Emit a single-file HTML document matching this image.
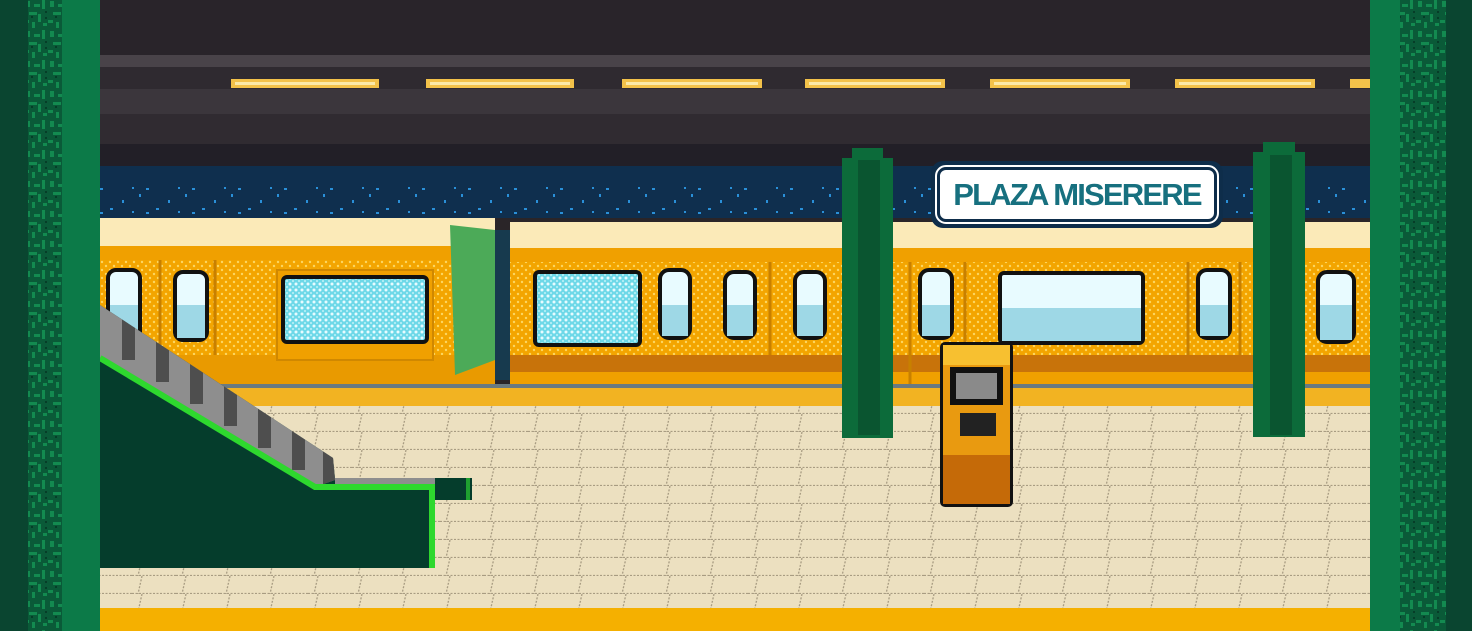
<!DOCTYPE html>
<html><head><meta charset="utf-8"><style>
html,body{margin:0;padding:0;width:1472px;height:631px;overflow:hidden;background:#2a2528}
svg{display:block}
.sign{position:absolute;left:931px;top:161px;width:292px;height:67px;box-sizing:border-box;background:#0e2d4a;border-radius:12px;padding:6px}
.sign div{width:100%;height:100%;box-sizing:border-box;background:#fff;border:3px solid #0e2d4a;border-radius:9px;outline:2px solid #fff;display:flex;align-items:center;justify-content:center;font:bold 31px "Liberation Sans",sans-serif;color:#17707f;letter-spacing:-1.8px}
</style></head><body>
<svg width="1472" height="631" viewBox="0 0 1472 631" style="position:absolute;left:0;top:0">
<defs>
<pattern id="tile" width="44" height="18" patternUnits="userSpaceOnUse"><rect width="44" height="18" fill="#ece0c0"/><path d="M0 17.5H44M10 0L6 18" stroke="#a89c82" stroke-width="1.3" stroke-dasharray="2 1.5"/></pattern>
<pattern id="dots" width="8" height="8" patternUnits="userSpaceOnUse"><rect width="8" height="8" fill="#f3a500"/><circle cx="2" cy="2" r="1.2" fill="#fcd660"/><circle cx="6" cy="6" r="1.2" fill="#fcd660"/></pattern>
<pattern id="glass" width="6" height="6" patternUnits="userSpaceOnUse"><rect width="6" height="6" fill="#6ed8e8"/><circle cx="2" cy="2" r="1.5" fill="#e8fbff"/><circle cx="5" cy="5" r="1" fill="#c0f2f8"/></pattern>
<pattern id="noise" width="24" height="30" patternUnits="userSpaceOnUse"><rect width="24" height="30" fill="#0a5a38"/><g fill="#138a50"><rect x="2" y="1" width="4" height="6"/><rect x="10" y="4" width="6" height="3"/><rect x="18" y="0" width="3" height="9"/><rect x="5" y="12" width="8" height="3"/><rect x="14" y="14" width="3" height="8"/><rect x="0" y="20" width="5" height="3"/><rect x="8" y="22" width="3" height="6"/><rect x="19" y="23" width="4" height="3"/></g><g fill="#063d28"><rect x="21" y="11" width="2" height="2"/><rect x="21" y="17" width="2" height="2"/><rect x="7" y="16" width="2" height="2"/></g></pattern>
<pattern id="specks" width="46" height="24" patternUnits="userSpaceOnUse"><g fill="#2a90d8"><rect x="1" y="2" width="2" height="3"/><rect x="18" y="16" width="3" height="2"/><rect x="30" y="8" width="2" height="3"/><rect x="40" y="19" width="2" height="2"/><rect x="8" y="20" width="3" height="2"/></g></pattern>
<clipPath id="esc"><polygon points="100,305 333,458 335,480 315,487 100,358"/></clipPath>
</defs>
<!-- ceiling -->
<rect x="100" y="0" width="1270" height="55" fill="#29242a"/>
<rect x="100" y="55" width="1270" height="12" fill="#494349"/>
<rect x="100" y="67" width="1270" height="22" fill="#2f2a30"/>
<g fill="#f3c24a"><rect x="231" y="79" width="148" height="9"/><rect x="426" y="79" width="148" height="9"/><rect x="622" y="79" width="140" height="9"/><rect x="805" y="79" width="140" height="9"/><rect x="990" y="79" width="140" height="9"/><rect x="1175" y="79" width="140" height="9"/><rect x="1350" y="79" width="20" height="9"/></g>
<g fill="#fbe9a8"><rect x="235" y="82" width="140" height="3"/><rect x="430" y="82" width="140" height="3"/><rect x="626" y="82" width="132" height="3"/><rect x="809" y="82" width="132" height="3"/><rect x="994" y="82" width="132" height="3"/><rect x="1179" y="82" width="132" height="3"/></g>
<rect x="100" y="89" width="1270" height="25" fill="#3b363c"/>
<rect x="100" y="114" width="1270" height="30" fill="#302b31"/>
<rect x="100" y="144" width="1270" height="22" fill="#221f27"/>
<rect x="100" y="166" width="1270" height="52" fill="#0f2f4e"/>
<rect x="100" y="186" width="1270" height="30" fill="url(#specks)"/>
<!-- train car 1 -->
<rect x="100" y="218" width="395" height="28" fill="#fbeab8"/>
<rect x="100" y="246" width="395" height="138" fill="url(#dots)"/>
<rect x="100" y="246" width="395" height="14" fill="#f0a000"/>
<rect x="100" y="355" width="395" height="30" fill="#e99a00"/>
<rect x="277" y="270" width="156" height="90" fill="#f0a000" stroke="#d08800" stroke-width="2"/>
<path d="M450 225L495 230V360L455 375Z" fill="#4caa58"/>
<rect x="495" y="230" width="15" height="150" fill="#173a4e"/>
<!-- car 2 -->
<rect x="510" y="222" width="860" height="26" fill="#fbeab8"/>
<rect x="510" y="248" width="860" height="137" fill="url(#dots)"/>
<rect x="510" y="248" width="860" height="14" fill="#f0a000"/>
<rect x="510" y="355" width="860" height="17" fill="#c8730a"/>
<rect x="510" y="372" width="860" height="12" fill="#f0a000"/>
<g stroke="#c88000" stroke-width="3"><path d="M160 260V355M215 260V355M770 262V355M910 262V385M965 262V385M1188 262V355M1240 262V355"/></g>
<!-- windows -->
<g stroke="#111" stroke-width="4">
<rect x="108" y="270" width="32" height="70" rx="8" fill="#e8fbff"/>
<rect x="175" y="272" width="32" height="68" rx="8" fill="#e8fbff"/>
<rect x="283" y="277" width="144" height="65" rx="4" fill="url(#glass)"/>
<rect x="535" y="272" width="105" height="73" rx="4" fill="url(#glass)"/>
<rect x="660" y="270" width="30" height="68" rx="9" fill="#e8fbff"/>
<rect x="725" y="272" width="30" height="66" rx="9" fill="#e8fbff"/>
<rect x="795" y="272" width="30" height="66" rx="9" fill="#e8fbff"/>
<rect x="920" y="270" width="32" height="68" rx="9" fill="#e8fbff"/>
<rect x="1000" y="273" width="143" height="70" rx="4" fill="#e8fbff"/>
<rect x="1198" y="270" width="32" height="68" rx="9" fill="#e8fbff"/>
<rect x="1318" y="272" width="36" height="70" rx="9" fill="#e8fbff"/>
</g>
<g fill="#9ed8e6"><rect x="110" y="305" width="28" height="33"/><rect x="177" y="305" width="28" height="33"/><rect x="662" y="305" width="26" height="31"/><rect x="727" y="305" width="26" height="31"/><rect x="797" y="305" width="26" height="31"/><rect x="922" y="305" width="28" height="31"/><rect x="1002" y="308" width="139" height="33"/><rect x="1200" y="305" width="28" height="31"/><rect x="1320" y="305" width="32" height="35"/></g>
<!-- platform -->
<rect x="100" y="384" width="1270" height="4" fill="#6a7a80"/>
<rect x="100" y="388" width="1270" height="18" fill="#f2b322"/>
<rect x="100" y="406" width="1270" height="202" fill="url(#tile)"/>
<rect x="100" y="608" width="1270" height="23" fill="#f5b000"/>
<!-- pillars -->
<rect x="842" y="158" width="51" height="280" fill="#0c6b3a"/><rect x="852" y="148" width="31" height="12" fill="#0c6b3a"/><rect x="858" y="160" width="22" height="275" fill="#0a5530"/>
<rect x="1253" y="152" width="52" height="285" fill="#0c6b3a"/><rect x="1263" y="142" width="32" height="12" fill="#0c6b3a"/><rect x="1270" y="155" width="22" height="280" fill="#0a5530"/>
<!-- ticket machine -->
<rect x="940" y="342" width="73" height="165" rx="5" fill="#111"/>
<rect x="943" y="345" width="67" height="159" rx="3" fill="#e99a10"/>
<rect x="943" y="345" width="67" height="20" fill="#f7c030"/>
<rect x="943" y="455" width="67" height="49" fill="#c56a08"/>
<rect x="950" y="367" width="53" height="38" fill="#111"/><rect x="956" y="373" width="41" height="26" fill="#8a8a8a"/>
<rect x="960" y="413" width="36" height="23" fill="#222"/>
<!-- escalator -->
<polygon points="100,305 333,458 335,478 472,478 472,500 432,500 432,568 100,568" fill="#053d2c"/>
<g clip-path="url(#esc)">
<rect x="100" y="300" width="240" height="190" fill="#8e8e8e"/>
<g fill="#4e4e4e">
<rect x="122" y="300" width="13" height="60"/><rect x="156" y="322" width="13" height="60"/><rect x="190" y="344" width="13" height="60"/><rect x="224" y="366" width="13" height="60"/><rect x="258" y="388" width="13" height="60"/><rect x="292" y="410" width="13" height="60"/><rect x="323" y="432" width="13" height="60"/>
</g>
<g fill="#053d2c">
<polygon points="100,305 135,305 135,328 169,328 169,350 203,350 203,372 237,372 237,394 271,394 271,416 305,416 305,438 336,438 336,300 100,300"/>
</g>
</g>
<rect x="335" y="478" width="100" height="6" fill="#8e8e8e"/>
<path d="M100 358L315 487H432V568" stroke="#2ed82e" stroke-width="6" fill="none"/>
<rect x="466" y="478" width="4" height="22" fill="#1fa030"/>
<!-- side bars -->
<rect x="0" y="0" width="100" height="631" fill="#0a4530"/>
<rect x="28" y="0" width="34" height="631" fill="url(#noise)"/>
<rect x="62" y="0" width="38" height="631" fill="#0c7a48"/>
<rect x="1370" y="0" width="102" height="631" fill="#0a4530"/>
<rect x="1370" y="0" width="30" height="631" fill="#0c7a48"/>
<rect x="1400" y="0" width="46" height="631" fill="url(#noise)"/>
</svg>
<div class="sign"><div>PLAZA MISERERE</div></div>
</body></html>
